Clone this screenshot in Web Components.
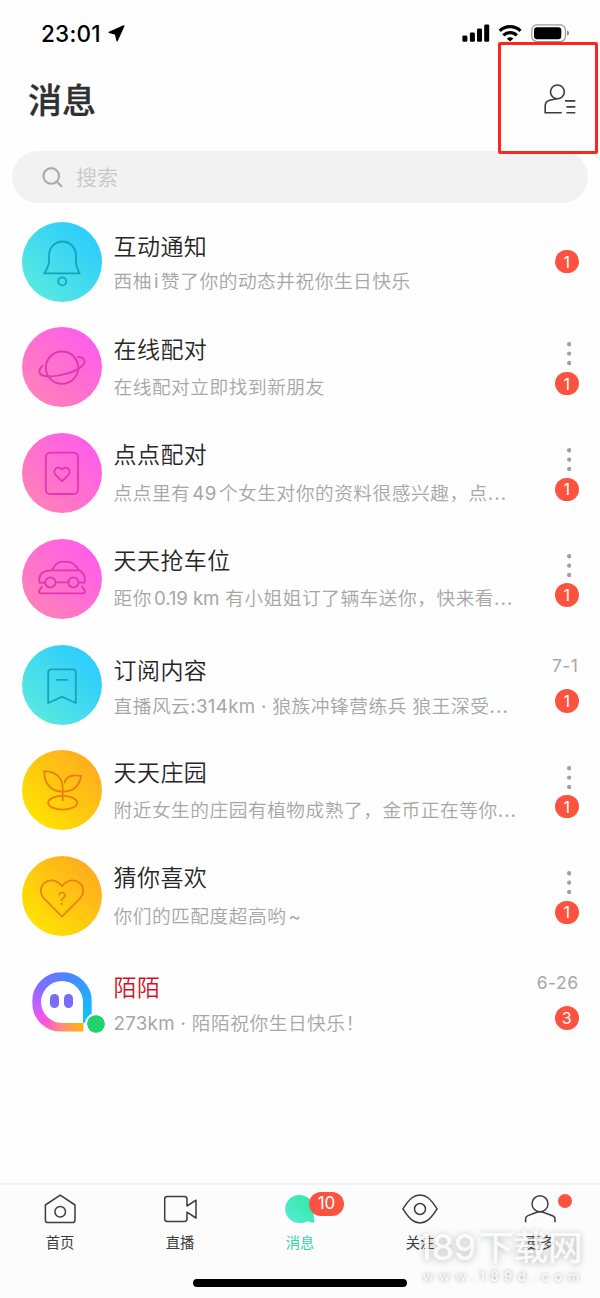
<!DOCTYPE html>
<html lang="zh-CN">
<head>
<meta charset="utf-8">
<title>消息</title>
<style>
html,body{margin:0;background:#fefefe}
body{width:600px;height:1298px;overflow:hidden;font-family:Inter,"Noto Sans CJK SC",sans-serif}
</style>
</head>
<body>
<message-app></message-app>
<script>
const define = (name, html, setup) => {
  const tpl = document.createElement('template');
  tpl.innerHTML = html;
  customElements.define(name, class extends HTMLElement {
    connectedCallback() {
      if (this.shadowRoot) return;
      this.attachShadow({mode: 'open'}).appendChild(tpl.content.cloneNode(true));
      if (setup) setup(this, this.shadowRoot);
    }
  });
};

define('status-bar', `
<style>
:host{display:flex;height:66px;box-sizing:border-box;padding:0 31px 0 41px;align-items:center;justify-content:space-between;color:#000}
.time{display:flex;align-items:center;gap:7px;font-size:22.5px;font-weight:500;letter-spacing:.25px}
svg{display:block}
</style>
<div class="time"><span>23:01</span><svg width="17" height="17" viewBox="0 0 17 17"><path d="M15.8.9 1.2 7.4l6.3 1.7 1.6 6.6z" stroke="#000" stroke-width="1.4" stroke-linejoin="round"/></svg></div>
<svg width="107" height="18" viewBox="462 23.6 107 18">
<g><rect x="462.4" y="35" width="5" height="6.3" rx="1.3"/><rect x="469.9" y="32" width="5" height="9.3" rx="1.3"/><rect x="477" y="28" width="5" height="13.3" rx="1.3"/><rect x="484.2" y="24" width="5" height="17.3" rx="1.3"/></g>
<g fill="none" stroke="#000" stroke-width="3.2"><path d="M499.7 30.4A15 15 0 0 1 520.5 30.4M503.4 34.9A9.6 9.6 0 0 1 516.8 34.9"/></g>
<path d="M506.8 38Q510.1 35.6 513.4 38L510.1 41.2Z"/>
<rect x="531.8" y="24.5" width="33.6" height="16.6" rx="5" fill="none" stroke="#999" stroke-width="1.2"/><rect x="534" y="26.8" width="27.3" height="12" rx="3"/><path d="M567 30.2Q569 31 569 32.8T567 35.4Z" fill="#888"/>
</svg>`);

define('page-header', `
<style>
:host{display:flex;height:85px;box-sizing:border-box;padding:8px 24px 23px 28px;justify-content:space-between;align-items:center}
h1{margin:0;font-size:34px;line-height:54px;font-weight:500;-webkit-text-stroke:.3px #303030;color:#303030;padding-bottom:0}
svg{display:block;margin-bottom:5px}
</style>
<h1><slot></slot></h1>
<svg width="32" height="30" viewBox="544 84.5 32 30" fill="none" stroke="#3c3c3c" stroke-width="1.6"><circle cx="557.4" cy="92.4" r="6.9"/><path d="M561.8 113.3H545.2V106.5Q545.2 102 549.5 100.8L557 99.2M565 101.4H575.3M566.5 107.4H575.3M566.5 113.3H575.3"/></svg>`);

define('search-bar', `
<style>
:host{display:flex;height:52px;margin:0 12px;padding-left:30px;box-sizing:border-box;border-radius:26px;background:#f2f2f2;align-items:center;gap:13px;color:#c8c8c8;font-size:21px;font-weight:350}
svg{display:block}
span{padding-bottom:2px}
</style>
<svg width="21" height="21" viewBox="0 0 21 21" fill="none" stroke="#aaa" stroke-width="2.1"><circle cx="9.2" cy="8.9" r="7.8"/><path d="M14.7 14.6 20 19.8"/></svg><span><slot></slot></span>`);

define('unread-badge', `
<style>
:host{display:flex;width:23.4px;height:23.4px;border-radius:12px;background:#fb5340;color:#fff;font-size:16px;font-weight:400;align-items:center;justify-content:center;line-height:1}
</style><slot></slot>`);

define('more-dots', `
<style>
:host{display:block;margin-right:7.3px}
svg{display:block}
</style><svg width="4.4" height="23.2" viewBox="0 0 4.4 23.2" fill="#a1a1a1"><circle cx="2.2" cy="2.2" r="2.2"/><circle cx="2.2" cy="11.6" r="2.2"/><circle cx="2.2" cy="21" r="2.2"/></svg>`);

define('online-logo', `
<style>
:host{display:grid;width:80px;height:80px;place-items:center;position:relative}
.ring{display:grid;place-items:center;width:59.4px;height:59.4px;border-radius:50% 50% 0 50%;background:conic-gradient(from 135deg,#ffb500,#ff8f78 12%,#fb50e4 25%,#c95fff 34%,#7b70ff 48%,#4f83ff 65%,#29a8ff 83%,#0ac6ff);clip-path:polygon(0 0,100% 0,100% 85%,86% 85%,86% 100%,0 100%)}
.face{width:42.6px;height:42.6px;border-radius:50% 50% 0 50%;background:#fefefe;display:flex;justify-content:center;gap:4.8px}
.face i{width:8.8px;height:13.8px;border-radius:4.4px;background:linear-gradient(135deg,#6b70fa,#8a66f8);margin:13.4px 1px 0 -.6px}
.dot{position:absolute;left:63.2px;top:51.3px;width:17.8px;height:17.8px;border:2px solid #fefefe;border-radius:50%;background:#20d26b;background-clip:padding-box}
</style>
<div class="ring"><div class="face"><i></i>&nbsp;<i></i></div></div><span class="dot"></span>`.replace('&nbsp;', ''));

const icons = {
  bell: '<path d="M22.3 51.4H57.6C55 47 54 44 54 39V33.3A13.5 13.8 0 0 0 27 33.3V39C27 44 25 47 22.3 51.4Z"/><circle cx="40.2" cy="59.4" r="4"/>',
  planet: '<circle cx="40" cy="40.7" r="16.2"/><path d="M20.6 38.6C17.4 41.7 16.3 44.8 18.5 47C22 50.6 34 50.2 46.3 46.2C58 42.3 64.5 36.6 62.2 32.7C61.1 30.7 59 30 56 29.8"/>',
  card: '<rect x="23.8" y="19.6" width="32.2" height="41.4" rx="4.6"/><path d="M40 48.2 33.6 41.8C29.8 37.8 35.5 31.5 40 36.5C44.5 31.5 50.2 37.8 46.4 41.8Z"/>',
  car: '<path d="M23 43.6H17.4V39.5C17.4 34.5 22 31.4 29.7 31.4C31.8 28 34.4 22.8 38.5 22.8H46C50.5 22.8 54 26.5 57.3 31.4C61 33.5 62.7 36 62.7 40V43.6H56.8M29.7 31.4H57.3M33.8 43.4H46"/><circle cx="28.4" cy="43.4" r="5.1"/><circle cx="51.4" cy="43.4" r="5.1"/><path d="M19.7 47.6Q19.5 48.8 17.6 51Q16 54.3 19.5 54.3H60.4Q64 54.3 62.4 51Q60.5 48.8 60.3 47.6"/>',
  bookmark: '<path d="M26.2 58V27.6Q26.2 24.4 29.4 24.4H50.6Q53.8 24.4 53.8 27.6V58L40 51.7Z"/><path d="M35 34.8H45"/>',
  plant: '<path d="M40.7 50.2V38C40.7 28 34 21.5 22.2 21.2C22.2 32 27.5 41.5 40.7 41.7C51.5 41.5 57.5 35.5 59.2 26C50 24 43.6 26.8 42.7 32.5"/><ellipse cx="40.7" cy="52.7" rx="14.5" ry="6.9"/>',
  heart: '<path d="M40 60.6 23.2 43.7C10.5 31.5 28.5 15.5 40 30.3C51.5 15.5 69.5 31.5 56.8 43.7Z"/><text x="40" y="48.9" text-anchor="middle" font-size="17" fill="#ec7f0c" stroke="none">?</text>'
};
const tones = {
  cyan: ['#5aeadf', '#2acbff', '#15a3bb'],
  pink: ['#ff82b8', '#ff5ceb', '#e334b2'],
  gold: ['#ffe500', '#ffaa20', '#ec7f0c']
};
define('round-icon', `
<style>
:host{display:block;width:80px;height:80px;border-radius:50%;background:linear-gradient(45deg,var(--from) 10%,var(--to) 90%)}
svg{display:block;fill:none;stroke:var(--line);stroke-width:1.8;stroke-linejoin:round;stroke-linecap:round}
</style><svg width="80" height="80" viewBox="0 0 80 80"></svg>`, (el, root) => {
  const [a, b, c] = tones[el.getAttribute('tone')];
  el.style.setProperty('--from', a);
  el.style.setProperty('--to', b);
  el.style.setProperty('--line', c);
  root.querySelector('svg').innerHTML = icons[el.getAttribute('name')];
});

define('message-row', `
<style>
:host{display:grid;grid-template-columns:80px 1fr auto;column-gap:11.5px;height:105.78px;box-sizing:border-box;padding:0 21.5px 0 22px}
.avatar{align-self:center}
.text{display:flex;flex-direction:column;padding-top:20.2px;gap:10.2px;min-width:0;white-space:nowrap}
.title{font-size:23px;line-height:30px;letter-spacing:.45px;color:#262626;font-weight:350}
.sub{font-size:18.7px;line-height:26px;letter-spacing:.52px;color:#a6a6a6;font-weight:350}
.side{display:flex;flex-direction:column;align-items:flex-end;padding-top:28px;gap:6.2px}
.date{font-size:17.5px;line-height:20px;color:#a8a8a8;letter-spacing:.5px;font-weight:400}
:host([kind=notice]) .text{padding-top:23.4px;gap:6.8px}
:host([kind=notice]) .side{padding-top:41.4px}
:host([kind=dated]) .text{padding-top:23.9px;gap:8px}
:host([kind=dated]) .side{padding-top:24.4px;gap:13px}
:host([alert]) .title{color:#d7101f}
</style>
<div class="avatar"><slot name="avatar"></slot></div>
<div class="text"><div class="title"></div><div class="sub"><slot></slot></div></div>
<div class="side"><slot name="side"></slot></div>`, (el, root) => {
  root.querySelector('.title').textContent = el.getAttribute('heading');
  const side = root.querySelector('.side');
  const kind = el.getAttribute('kind');
  if (kind === 'dated') {
    const d = document.createElement('span');
    d.className = 'date';
    d.textContent = el.getAttribute('date');
    side.prepend(d);
  } else if (kind !== 'notice') side.prepend(document.createElement('more-dots'));
});

define('tab-item', `
<style>
:host{display:flex;flex:1;flex-direction:column;align-items:center;gap:7.6px;padding-top:8px;position:relative;color:#3c3c3c;font-size:14.3px;line-height:20px}
:host([active]) {color:#35d6a6}
::slotted(svg){display:block;width:40px;height:32px;fill:none;stroke:#3c3c3c;stroke-width:1.5;stroke-linejoin:round}
::slotted(unread-badge){position:absolute;left:69px;top:6.5px;width:35px;height:24px;font-size:17px}
</style><slot name="icon"></slot><span><slot></slot></span><slot name="badge"></slot>`);

define('tab-bar', `
<style>
:host{display:flex;flex-direction:column;height:115px;background:#fcfcfc;border-top:2px solid #f3f3f3;box-sizing:border-box}
.tabs{display:flex;height:94px}
.home{width:214px;height:8px;border-radius:4px;background:#000;align-self:center}
</style>
<div class="tabs">
<tab-item><svg slot="icon" viewBox="0 0 40 32"><path d="M20.2 2.2 35 12V27Q35 29.6 32.4 29.6H8Q5.4 29.6 5.4 27V12Z"/><circle cx="20.2" cy="18.8" r="5.3"/></svg>首页</tab-item>
<tab-item><svg slot="icon" viewBox="0 0 40 32"><path d="M27 13.5V6.2Q27 3.6 24.4 3.6H7.3Q4.7 3.6 4.7 6.2V25.8Q4.7 28.4 7.3 28.4H24.4Q27 28.4 27 25.8V19.2L36 25V7.2L27 13"/></svg>直播</tab-item>
<tab-item active><svg slot="icon" viewBox="0 0 40 32"><defs><linearGradient id="g" x1="0" y1="1" x2="1" y2="0"><stop stop-color="#59ead5"/><stop offset="1" stop-color="#2eeaa3"/></linearGradient></defs><path d="M19.5 2C27.8 2 34 8.5 34 16C34 20.5 33 23 34.8 28.8C32 30.3 30.2 29.6 28.5 28C18.5 33.5 5.2 27.5 5.2 16.2C5.2 8.2 11.5 2 19.5 2Z" fill="url(#g)" stroke="none"/></svg>消息<unread-badge slot="badge">10</unread-badge></tab-item>
<tab-item><svg slot="icon" viewBox="0 0 40 32"><path d="M2.9 15.9C9.6 5.4 14 1.9 20 1.9S30.4 5.4 37.1 15.9C30.4 26.4 26 29.9 20 29.9S9.6 26.4 2.9 15.9Z"/><circle cx="20" cy="16" r="5.5"/></svg>关注</tab-item>
<tab-item><svg slot="icon" viewBox="0 0 40 32"><circle cx="20" cy="10.8" r="8"/><path d="M5.6 29.2V25.5Q5.6 23.5 8 22.6L15.5 19.8Q20 17.6 24.5 19.8L32.5 22.8Q35 23.8 35 26V29.2"/></svg>更多<span slot="badge" style="position:absolute;left:77.5px;top:8.5px;width:14.6px;height:14.6px;border-radius:50%;background:#fb5340"></span></tab-item>
</div><div class="home"></div>`);

define('site-watermark', `
<style>
:host{position:absolute;left:417px;top:1226px;width:170px;color:rgba(255,255,255,.88);white-space:nowrap;text-shadow:0 1px 7px rgba(90,90,90,.42)}
.name{display:flex;align-items:baseline;font-size:34.5px;line-height:44px;font-weight:500}
.num{font-size:35.5px;letter-spacing:0;width:62px}
.url{font-size:12.5px;line-height:14px;letter-spacing:5.9px;margin:0 0 0 6px;font-weight:500;text-shadow:0 0 4px rgba(90,90,90,.6)}
</style><div class="name"><span class="num">189</span><span>下载网</span></div><div class="url">www.189d.com</div>`);

define('focus-frame', `
<style>:host{position:absolute;left:498px;top:42px;width:100px;height:112px;box-sizing:border-box;border:3px solid #fb1b12;border-radius:2px;opacity:.95}</style>`);

define('message-app', `
<style>
:host{display:flex;flex-direction:column;position:relative;width:600px;height:1298px;background:#fefefe;overflow:hidden}
main{flex:1;min-height:0;padding-top:5.7px;display:flex;flex-direction:column}
b{font-weight:400;letter-spacing:.3px}
b.gap{margin:0 2.3px 0 2px}
</style>
<status-bar></status-bar>
<page-header>消息</page-header>
<search-bar>搜索</search-bar>
<main>
<message-row kind="notice" heading="互动通知"><round-icon slot="avatar" name="bell" tone="cyan"></round-icon>西柚<b class="gap">i</b>赞了你的动态并祝你生日快乐<unread-badge slot="side">1</unread-badge></message-row>
<message-row heading="在线配对"><round-icon slot="avatar" name="planet" tone="pink"></round-icon>在线配对立即找到新朋友<unread-badge slot="side">1</unread-badge></message-row>
<message-row heading="点点配对"><round-icon slot="avatar" name="card" tone="pink"></round-icon>点点里有<b class="gap">49</b>个女生对你的资料很感兴趣，点<b style="letter-spacing:1.1px">...</b><unread-badge slot="side">1</unread-badge></message-row>
<message-row heading="天天抢车位"><round-icon slot="avatar" name="car" tone="pink"></round-icon>距你<b style="margin-left:2px;letter-spacing:-.1px">0.19 km</b> 有小姐姐订了辆车送你，快来看<b style="letter-spacing:1.1px">...</b><unread-badge slot="side">1</unread-badge></message-row>
<message-row kind="dated" date="7-1" heading="订阅内容"><round-icon slot="avatar" name="bookmark" tone="cyan"></round-icon>直播风云<b>:314km ·</b> 狼族冲锋营练兵 狼王深受<b style="letter-spacing:1.1px">...</b><unread-badge slot="side">1</unread-badge></message-row>
<message-row heading="天天庄园"><round-icon slot="avatar" name="plant" tone="gold"></round-icon>附近女生的庄园有植物成熟了，金币正在等你<b style="letter-spacing:1.1px">...</b><unread-badge slot="side">1</unread-badge></message-row>
<message-row heading="猜你喜欢"><round-icon slot="avatar" name="heart" tone="gold"></round-icon>你们的匹配度超高哟<b class="gap">~</b><unread-badge slot="side">1</unread-badge></message-row>
<message-row kind="dated" alert date="6-26" heading="陌陌"><online-logo slot="avatar"></online-logo><b>273km ·</b> 陌陌祝你生日快乐！<unread-badge slot="side">3</unread-badge></message-row>
</main>
<tab-bar></tab-bar>
<focus-frame></focus-frame>
<site-watermark></site-watermark>`);
</script>
</body>
</html>
